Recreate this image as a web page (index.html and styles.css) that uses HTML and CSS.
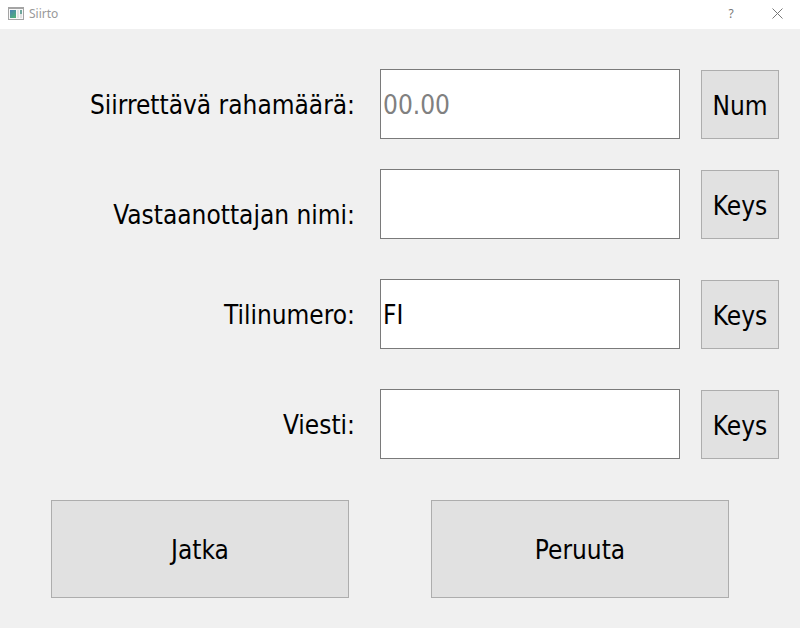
FILE: index.html
```html
<!DOCTYPE html>
<html lang="fi">
<head>
<meta charset="utf-8">
<title>Siirto</title>
<link rel="stylesheet" href="styles.css">
</head>
<body>
<header class="titlebar">
  <svg class="app-icon" width="16" height="14" viewBox="0 0 16 14" aria-hidden="true">
    <defs>
      <linearGradient id="pane" x1="0" y1="0" x2="0.6" y2="1">
        <stop offset="0" stop-color="#4a80b4"/>
        <stop offset="1" stop-color="#4fae7c"/>
      </linearGradient>
    </defs>
    <rect x=".5" y=".5" width="15" height="12" fill="#f8f8f8" stroke="#a4a4a4"/>
    <path d="M0 1.5h16" stroke="#a4a4a4"/>
    <rect x="2" y="3" width="6" height="8" fill="url(#pane)"/>
    <rect x="9" y="3" width="2" height="8" fill="#e2e2e2"/>
    <rect x="12" y="3" width="2" height="4" fill="#6fa79c"/>
    <rect x="12" y="7" width="2" height="4" fill="#e2e2e2"/>
  </svg>
  <h1 class="title">Siirto</h1>
  <button class="window-button" type="button" aria-label="Ohje">?</button>
  <button class="window-button" type="button" aria-label="Sulje">
    <svg width="11" height="11" viewBox="0 0 11 11" aria-hidden="true"><path d="M.5 .5l10 10M10.5 .5l-10 10" stroke="#777" fill="none"/></svg>
  </button>
</header>
<form class="transfer">
  <div class="row">
    <label class="label" for="amount">Siirrettävä rahamäärä:</label>
    <input class="field" id="amount" type="text" placeholder="00.00">
    <button class="button key" type="button">Num</button>
  </div>
  <div class="row">
    <label class="label low" for="recipient">Vastaanottajan nimi:</label>
    <input class="field" id="recipient" type="text">
    <button class="button key" type="button">Keys</button>
  </div>
  <div class="row spaced">
    <label class="label" for="account">Tilinumero:</label>
    <input class="field" id="account" type="text" value="FI">
    <button class="button key" type="button">Keys</button>
  </div>
  <div class="row spaced">
    <label class="label" for="message">Viesti:</label>
    <input class="field" id="message" type="text">
    <button class="button key" type="button">Keys</button>
  </div>
  <div class="actions">
    <button class="button" type="button">Jatka</button>
    <button class="button" type="button">Peruuta</button>
  </div>
</form>
</body>
</html>
```
FILE: styles.css
```css
* {
  box-sizing: border-box;
}

body {
  margin: 0;
  min-height: 100vh;
  background: #f0f0f0;
  color: #000;
  font-family: "Noto Sans", "Liberation Sans", sans-serif;
}

.titlebar {
  display: flex;
  align-items: center;
  height: 29px;
  padding: 0 0 2px 8px;
  background: #fff;
}

.title {
  flex: 1;
  margin: 0 0 0 5px;
  color: #999;
  font-size: 12px;
  font-weight: 400;
  line-height: 16px;
}

.window-button {
  display: flex;
  align-items: center;
  justify-content: center;
  width: 46px;
  height: 27px;
  padding: 0;
  border: 0;
  background: none;
  color: #777;
  font-family: inherit;
  font-size: 12px;
}

.transfer {
  padding: 40px 21px 30px 0;
  font-family: "DejaVu Sans Condensed", "Noto Sans", sans-serif;
  font-size: 26px;
}

.row {
  display: grid;
  grid-template-columns: 359fr 300fr 78px;
  column-gap: 21px;
  align-items: center;
  margin-bottom: 30px;
}

.row.spaced {
  margin-top: 40px;
}

.label {
  padding: 2px 4px 0 0;
  line-height: 48px;
  text-align: right;
  white-space: nowrap;
}

.label.low {
  align-self: end;
}

.field {
  width: 100%;
  height: 70px;
  padding: 2px 2px 0;
  border: 1px solid #7a7a7a;
  border-radius: 0;
  background: #fff;
  color: #000;
  font: inherit;
}

.field::placeholder {
  color: #808080;
  opacity: 1;
}

.button {
  padding: 2px 0 0;
  border: 1px solid #adadad;
  background: #e1e1e1;
  color: #000;
  font: inherit;
}

.key {
  align-self: end;
  height: 69px;
}

.actions {
  display: grid;
  grid-template-columns: 1fr 1fr;
  column-gap: 82px;
  margin-top: 41px;
  padding: 0 50px 0 51px;
}

.actions .button {
  height: 98px;
}
```
